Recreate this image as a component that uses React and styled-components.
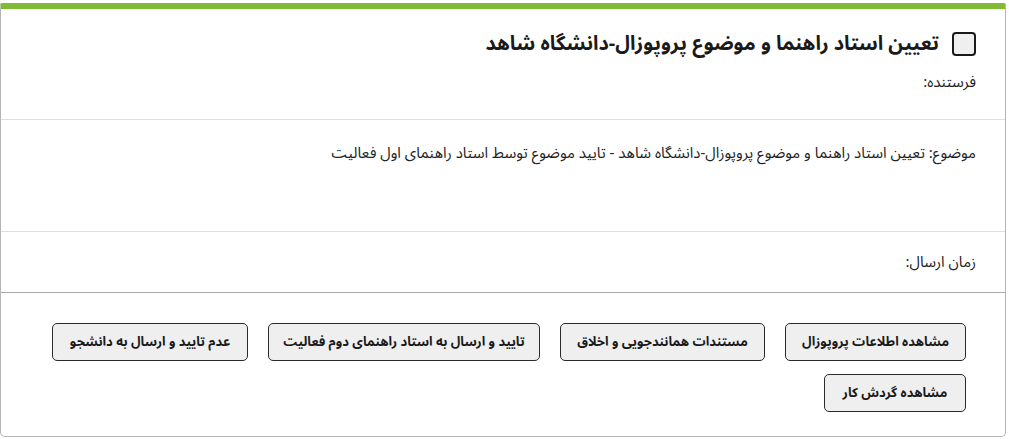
import React from "react";
import styled, { createGlobalStyle } from "styled-components";

const Global = createGlobalStyle`
  html, body { margin: 0; padding: 0; background: #fff; }
  body { font-family: "Noto Sans Arabic", "Vazirmatn", "DejaVu Sans", sans-serif; color: #222; }
  * { box-sizing: border-box; }
`;

const Card = styled.div`
  direction: rtl;
  margin-top: 3px;
  width: 1006px;
  height: 434px;
  border: 1px solid #b5b5b5;
  border-top: 6px solid #80bb34;
  border-radius: 2px 2px 5px 5px;
  background: #fff;
  display: flex;
  flex-direction: column;
`;

const Section = styled.div`
  padding: ${(p) => p.$pad};
  height: ${(p) => p.$h}px;
  flex: none;
  border-bottom: 1px solid ${(p) => p.$line || "#dedede"};
`;

const TitleRow = styled.div`
  display: flex;
  align-items: center;
  gap: 13px;
`;

const Check = styled.span`
  width: 24px;
  height: 24px;
  border: 2px solid #1a1a1a;
  border-radius: 4px;
  background: #efefef;
  flex: none;
`;

const Title = styled.h1`
  margin: 0;
  font-size: 20px;
  font-weight: 700;
  line-height: 28px;
  color: #1a1a1a;
`;

const Text = styled.div`
  font-size: 15px;
  line-height: 22px;
  color: #222;
  margin-top: ${(p) => p.$mt || 0}px;
`;

const Buttons = styled.div`
  flex: 1;
  padding: 30px 39px 0 0;
  display: flex;
  flex-wrap: wrap;
  align-content: flex-start;
  column-gap: 20px;
  row-gap: 13px;
  width: 960px;
`;

const Btn = styled.button`
  font-family: inherit;
  direction: rtl;
  height: 38px;
  width: ${(p) => p.$w}px;
  padding: 0;
  font-size: 13px;
  font-weight: 700;
  color: #1a1a1a;
  background: #efefef;
  border: 1px solid #2a2a2a;
  border-radius: 5px;
`;

export default function App() {
  return (
    <>
      <Global />
      <Card>
        <Section $pad="21px 29px 0 0" $h={111}>
          <TitleRow>
            <Check />
            <Title>تعیین استاد راهنما و موضوع پروپوزال-دانشگاه شاهد</Title>
          </TitleRow>
          <Text $mt={13}>فرستنده:</Text>
        </Section>
        <Section $pad="22px 29px 0 0" $h={112}>
          <Text>موضوع: تعیین استاد راهنما و موضوع پروپوزال-دانشگاه شاهد - تایید موضوع توسط استاد راهنمای اول فعالیت</Text>
        </Section>
        <Section $pad="19px 29px 0 0" $h={61} $line="#a9a9a9">
          <Text>زمان ارسال:</Text>
        </Section>
        <Buttons>
          <Btn $w={181}>مشاهده اطلاعات پروپوزال</Btn>
          <Btn $w={205}>مستندات همانندجویی و اخلاق</Btn>
          <Btn $w={272}>تایید و ارسال به استاد راهنمای دوم فعالیت</Btn>
          <Btn $w={196}>عدم تایید و ارسال به دانشجو</Btn>
          <Btn $w={142}>مشاهده گردش کار</Btn>
        </Buttons>
      </Card>
    </>
  );
}
